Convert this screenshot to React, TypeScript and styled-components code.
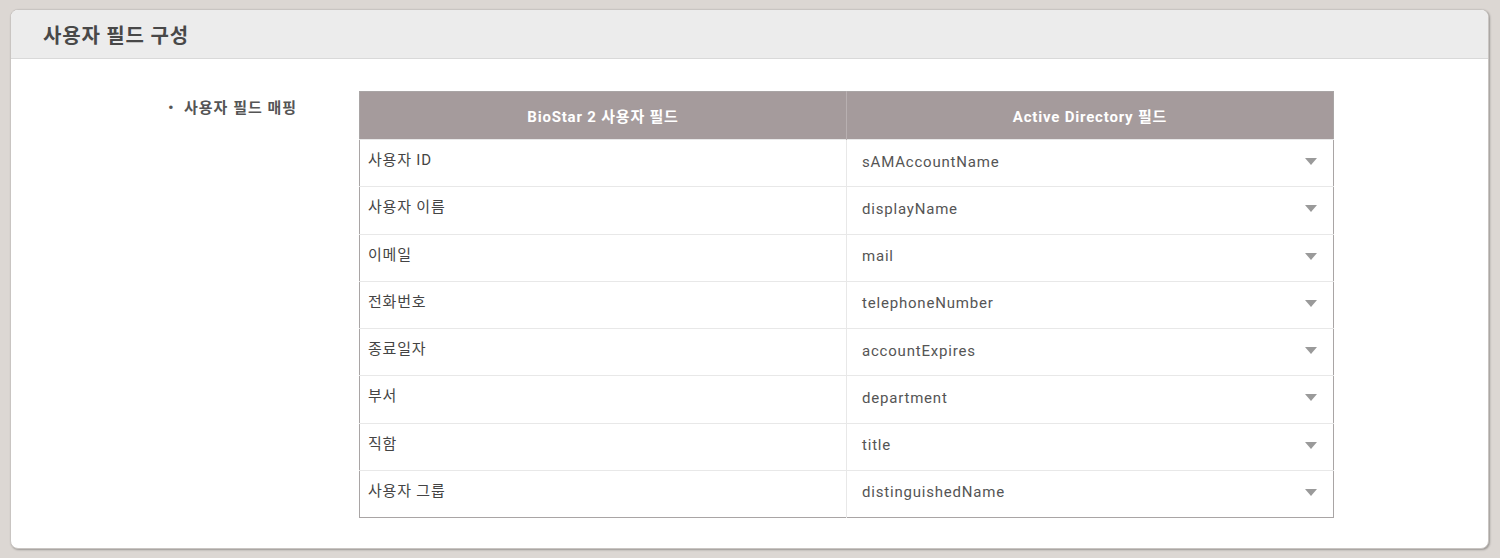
import React from "react";
import styled, { createGlobalStyle } from "styled-components";

type Mapping = {
  field: string;
  attribute: string;
};

const mappings: Mapping[] = [
  { field: "사용자 ID", attribute: "sAMAccountName" },
  { field: "사용자 이름", attribute: "displayName" },
  { field: "이메일", attribute: "mail" },
  { field: "전화번호", attribute: "telephoneNumber" },
  { field: "종료일자", attribute: "accountExpires" },
  { field: "부서", attribute: "department" },
  { field: "직함", attribute: "title" },
  { field: "사용자 그룹", attribute: "distinguishedName" }
];

export default function App() {
  return (
    <>
      <GlobalStyle />
      <Panel>
        <PanelHeader>
          <Title>사용자 필드 구성</Title>
        </PanelHeader>
        <PanelBody>
          <Label>사용자 필드 매핑</Label>
          <Table>
            <colgroup>
              <col width="50%" />
              <col width="50%" />
            </colgroup>
            <thead>
              <tr>
                <HeadCell>BioStar 2 사용자 필드</HeadCell>
                <HeadCell>Active Directory 필드</HeadCell>
              </tr>
            </thead>
            <tbody>
              {mappings.map(({ field, attribute }) => (
                <Row key={field}>
                  <FieldCell>{field}</FieldCell>
                  <SelectCell>
                    <Select>
                      <span>{attribute}</span>
                      <Arrow />
                    </Select>
                  </SelectCell>
                </Row>
              ))}
            </tbody>
          </Table>
        </PanelBody>
      </Panel>
    </>
  );
}

const GlobalStyle = createGlobalStyle`
  body {
    margin: 0;
    background: #dcd7d3;
    font-family: Roboto, "Noto Sans CJK KR", sans-serif;
    color: #444;
  }
  #root {
    padding: 9px 11px 9px 10px;
  }
`;

const Panel = styled.div`
  background: #fff;
  border: 1px solid #c9c5c2;
  border-radius: 8px;
  box-shadow: 1px 1px 2px rgba(0, 0, 0, 0.3);
  height: 538px;
  overflow: hidden;
`;

const PanelHeader = styled.div`
  background: #ececec;
  border-bottom: 1px solid #d9d9d9;
  height: 48px;
  display: flex;
  align-items: center;
  padding-left: 32px;
`;

const Title = styled.h1`
  margin: 0;
  font-size: 20px;
  letter-spacing: 0.8px;
  font-weight: 700;
  color: #484848;
`;

const PanelBody = styled.div`
  display: flex;
  align-items: flex-start;
  padding: 32px 0 0 157px;
`;

const Label = styled.div`
  width: 191px;
  padding-top: 5px;
  font-size: 15px;
  letter-spacing: 1px;
  font-weight: 700;
  color: #555;
  &::before {
    content: "•";
    display: inline-block;
    width: 16px;
    font-size: 17px;
    font-weight: 400;
    letter-spacing: 0;
  }
`;

const Table = styled.table`
  width: 975px;
  border-collapse: collapse;
  border: 1px solid #a9a5a5;
  font-size: 15px;
  letter-spacing: 0.8px;
`;

const HeadCell = styled.th`
  height: 47px;
  padding: 0;
  background: #a59b9c;
  color: #fff;
  font-weight: 700;
  text-align: center;
  border-left: 1px solid #b8b0b1;
  &:first-child {
    border-left: none;
  }
`;

const Row = styled.tr`
  height: 47.25px;
  border-top: 1px solid #e8e8e8;
`;

const FieldCell = styled.td`
  padding: 0 8px 9px;
  vertical-align: middle;
  color: #444;
`;

const SelectCell = styled.td`
  padding: 0 16px 0 15px;
  border-left: 1px solid #e8e8e8;
  vertical-align: middle;
`;

const Select = styled.div`
  display: flex;
  align-items: center;
  justify-content: space-between;
  color: #555;
  padding-bottom: 3px;
`;

const Arrow = styled.span`
  width: 0;
  height: 0;
  border-left: 6px solid transparent;
  border-right: 6px solid transparent;
  border-top: 7px solid #9a9a9a;
`;
